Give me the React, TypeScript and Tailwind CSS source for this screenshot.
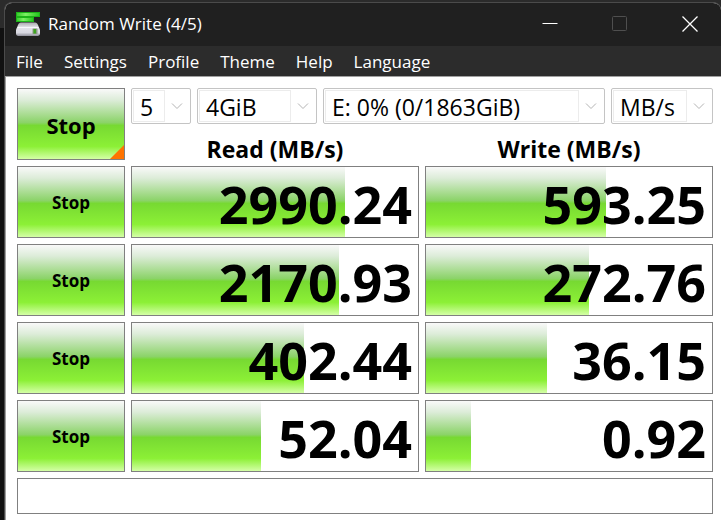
import { useState } from 'react';

interface SpeedSelectProps {
    label: string;
    options: string[];
    className: string;
}

interface MeterProps {
    label: string;
    value: string;
    percent: number;
}

const menuItems = ['File', 'Settings', 'Profile', 'Theme', 'Help', 'Language'];

const results = [
    { id: 'test1', read: '2990.24', readPercent: 74.5, write: '593.25', writePercent: 63 },
    { id: 'test2', read: '2170.93', readPercent: 72.4, write: '272.76', writePercent: 57 },
    { id: 'test3', read: '402.44', readPercent: 60.2, write: '36.15', writePercent: 42.4 },
    { id: 'test4', read: '52.04', readPercent: 45.2, write: '0.92', writePercent: 15.8 },
];

const glossy =
    'bg-[linear-gradient(to_bottom,#f9f9f9_0%,#dcecd8_16%,#8bd368_48%,#77d932_52%,#8cf036_82%,#d4ffa6_100%)]';

function AppIcon() {
    return (
        <svg className="size-6" viewBox="0 0 24 24" aria-hidden="true">
            <defs>
                <linearGradient id="green" x1="0" x2="1" y1="0" y2="0">
                    <stop offset="0" stopColor="#35c82a" />
                    <stop offset="0.4" stopColor="#7df064" />
                    <stop offset="1" stopColor="#25c41e" />
                </linearGradient>
                <linearGradient id="drive" x1="0" x2="0" y1="0" y2="1">
                    <stop offset="0" stopColor="#a9a9ad" />
                    <stop offset="0.35" stopColor="#e4e4ea" />
                    <stop offset="0.75" stopColor="#d9d9e2" />
                    <stop offset="1" stopColor="#8f8f99" />
                </linearGradient>
            </defs>
            <rect x="0.5" y="0.5" width="23" height="4" fill="url(#green)" stroke="#1cb418" />
            <rect x="0.5" y="5.5" width="17" height="4" fill="url(#green)" stroke="#1cb418" />
            <path d="M5 10.5h14c1.5 0 2.4 1 3 2.5l1 2.500c.7 1 1 2 1 3v3c0 1.500-.8 2.500-2.500 2.500h-19C.8 24 0 23 0 21.500v-3c0-1 .3-2 1-3L2 13c.6-1.500 1.500-2.500 3-2.500z" fill="url(#drive)" />
            <path d="M1.5 15.5h21" stroke="#f8f8fc" />
            <rect x="16.5" y="16.5" width="5" height="5.5" rx="0.5" fill="#8a9a86" />
            <rect x="17.5" y="17" width="2.5" height="4.5" fill="#3fa51f" />
        </svg>
    );
}

function SpeedSelect({ label, options, className }: SpeedSelectProps) {
    const [value, setValue] = useState(options[0]);

    return (
        <div className={`flex h-9 items-center rounded-xs border border-[#c4c4c4] p-px ${className}`}>
            <select
                aria-label={label}
                value={value}
                onChange={(e) => setValue(e.target.value)}
                className="h-8 min-w-0 flex-1 appearance-none border border-[#ececec] bg-white pt-0.5 pl-1.5 text-[23px] leading-7 outline-none"
            >
                {options.map((option) => (
                    <option key={option}>{option}</option>
                ))}
            </select>
            <svg className="mx-1.5 h-3 w-3 shrink-0" viewBox="0 0 12 12" fill="none" stroke="#b4b4b4" aria-hidden="true">
                <path d="M1 3.5l5 5 5-5" />
            </svg>
        </div>
    );
}

function Meter({ label, value, percent }: MeterProps) {
    return (
        <div className="relative h-18 border border-[#808080] bg-white" aria-label={label}>
            <div className={`h-full ${glossy}`} style={{ width: `${percent}%` }} />
            <span className="absolute inset-0 flex items-center justify-end pt-1 pr-1.5 text-[52px] font-bold">
                {value}
            </span>
        </div>
    );
}

export default function App() {
    return (
        <div className="min-h-screen bg-[#111111] bg-[linear-gradient(#2b2b2b,#2b2b2b)] bg-[length:100%_28px] bg-no-repeat pt-0.5 pl-1 font-['Open_Sans',sans-serif] text-black">
            <div className="flex min-h-[518px] flex-col overflow-hidden rounded-t-lg border-t border-l border-[#4b4b4b] bg-white">
                {/* Title bar */}
                <header className="flex h-[43px] items-center bg-[#202020] pb-0.5 text-white">
                    <div className="flex flex-1 items-center gap-2 pl-[11px]">
                        <AppIcon />
                        <h1 className="text-[17px]">Random Write (4/5)</h1>
                    </div>
                    <button type="button" aria-label="Minimize" className="flex w-[70px] justify-center">
                        <svg className="size-4" viewBox="0 0 16 16" stroke="currentColor" aria-hidden="true">
                            <path d="M0.5 7.5h15" />
                        </svg>
                    </button>
                    <button type="button" aria-label="Maximize" disabled className="flex w-[70px] justify-center text-[#4f4f4f]">
                        <svg className="size-4" viewBox="0 0 16 16" fill="none" stroke="currentColor" aria-hidden="true">
                            <rect x="0.5" y="0.5" width="14" height="14" rx="1" />
                        </svg>
                    </button>
                    <button type="button" aria-label="Close" className="flex w-[66px] justify-center pl-1">
                        <svg className="size-4" viewBox="0 0 16 16" stroke="currentColor" strokeWidth="1.3" aria-hidden="true">
                            <path d="M0.5 0.5l15 15M15.5 0.5l-15 15" />
                        </svg>
                    </button>
                </header>

                {/* Menu */}
                <nav className="flex h-[31px] items-center gap-[21px] border-b border-[#a0a0a0] bg-[#2c2c2c] pt-0.5 pl-[11px] text-[17px] text-white">
                    {menuItems.map((item) => (
                        <button key={item} type="button">
                            {item}
                        </button>
                    ))}
                </nav>

                <main className="flex flex-1 flex-col gap-1.5 border-l border-[#a0a0a0] pt-[11px] pr-2 pb-1.5 pl-[11px]">
                    {/* Settings row */}
                    <div className="grid grid-cols-[108px_1fr] gap-1.5">
                        <button type="button" className={`relative h-18 border border-[#808080] pt-0.5 text-[22px] font-bold ${glossy}`}>
                            Stop
                            <span className="absolute right-0 bottom-0 size-3.5 bg-[#ff7300] [clip-path:polygon(100%_0,100%_100%,0_100%)]" />
                        </button>
                        <div className="flex flex-col justify-between">
                            <div className="flex gap-1.5">
                                <SpeedSelect label="Test count" options={['5', '1', '3', '9']} className="w-15" />
                                <SpeedSelect label="Test size" options={['4GiB', '1GiB', '8GiB']} className="w-30" />
                                <SpeedSelect label="Drive" options={['E: 0% (0/1863GiB)']} className="min-w-0 flex-1" />
                                <SpeedSelect label="Unit" options={['MB/s', 'GB/s', 'IOPS']} className="w-[102px]" />
                            </div>
                            <div className="grid grid-cols-2 gap-1.5 text-center text-[23px] leading-[22px] font-bold">
                                <h2>Read (MB/s)</h2>
                                <h2>Write (MB/s)</h2>
                            </div>
                        </div>
                    </div>

                    {/* Results */}
                    {results.map((row) => (
                        <div key={row.id} className="grid grid-cols-[108px_1fr_1fr] gap-1.5">
                            <button type="button" className={`h-18 border border-[#808080] pt-0.5 text-[17px] font-bold ${glossy}`}>
                                Stop
                            </button>
                            <Meter label="Read" value={row.read} percent={row.readPercent} />
                            <Meter label="Write" value={row.write} percent={row.writePercent} />
                        </div>
                    ))}

                    {/* Comment */}
                    <input
                        type="text"
                        aria-label="Comment"
                        className="h-9 w-full border border-[#808080] bg-white px-2 text-[23px] outline-none"
                    />
                </main>
            </div>
        </div>
    );
}
